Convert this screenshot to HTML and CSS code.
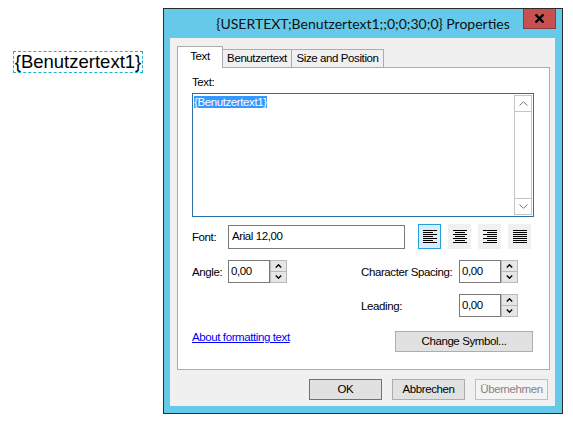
FILE: index.html
```html
<!DOCTYPE html>
<html lang="de">
  <head>
    <meta charset="UTF-8" />
    <title>USERTEXT Properties</title>
    <link rel="stylesheet" href="styles.css">
  </head>
  <body>
    <div class="page">
      <div class="field-label">{Benutzertext1}</div>

      <div class="dialog">
        <div class="titlebar">
          <span class="title">{USERTEXT;Benutzertext1;;0;0;30;0} Properties</span>
          <div class="close">
            <svg width="11" height="9" viewBox="0 0 11 9"><path d="M1.5 0.5 L9.5 8.5 M9.5 0.5 L1.5 8.5" stroke="#000" stroke-width="2.4" /></svg>
          </div>
        </div>

        <div class="client">
          <div class="tabs">
            <div class="tab active">Text</div>
            <div class="tab tab-user">Benutzertext</div>
            <div class="tab tab-size">Size and Position</div>
          </div>

          <div class="panel">
            <div class="lbl-text">Text:</div>
            <div class="textbox">
              <div class="textbox-content"><span class="sel">{Benutzertext1}</span></div>
              <div class="vscroll">
                <div class="sb-btn">
                  <svg width="9" height="5" viewBox="0 0 9 5"><path d="M0.5 4.5 L4.5 0.8 L8.5 4.5" fill="none" stroke="#777" /></svg>
                </div>
                <div class="sb-track"></div>
                <div class="sb-btn">
                  <svg width="9" height="5" viewBox="0 0 9 5"><path d="M0.5 0.5 L4.5 4.2 L8.5 0.5" fill="none" stroke="#777" /></svg>
                </div>
              </div>
            </div>

            <div class="row font-row">
              <span class="lbl">Font:</span>
              <div class="input font-input">Arial 12,00</div>
              <div class="align-group">
                <div class="align-btn selected">
                  <svg width="14" height="13" viewBox="0 0 14 13"><path d="M0 0.5h14M0 2.5h10M0 4.5h14M0 6.5h10M0 8.5h14M0 10.5h10M0 12.5h14" stroke="#000" /></svg>
                </div>
                <div class="align-btn">
                  <svg width="14" height="13" viewBox="0 0 14 13"><path d="M0 0.5h14M2 2.5h10M0 4.5h14M2 6.5h10M0 8.5h14M2 10.5h10M0 12.5h14" stroke="#000" /></svg>
                </div>
                <div class="align-btn">
                  <svg width="14" height="13" viewBox="0 0 14 13"><path d="M0 0.5h14M4 2.5h10M0 4.5h14M4 6.5h10M0 8.5h14M4 10.5h10M0 12.5h14" stroke="#000" /></svg>
                </div>
                <div class="align-btn">
                  <svg width="14" height="13" viewBox="0 0 14 13"><path d="M0 0.5h14M0 2.5h14M0 4.5h14M0 6.5h14M0 8.5h14M0 10.5h14M0 12.5h14" stroke="#000" /></svg>
                </div>
              </div>
            </div>

            <div class="row num-row">
              <span class="lbl">Angle:</span>
              <div class="spin-field">
                <div class="input num-input">0,00</div>
                <div class="spin">
                  <div class="spin-btn"><svg width="7" height="4" viewBox="0 0 7 4"><path d="M0.8 3.5 L3.5 0.8 L6.2 3.5" fill="none" stroke="#000" stroke-width="1.4" /></svg></div>
                  <div class="spin-btn"><svg width="7" height="4" viewBox="0 0 7 4"><path d="M0.8 0.5 L3.5 3.2 L6.2 0.5" fill="none" stroke="#000" stroke-width="1.4" /></svg></div>
                </div>
              </div>
              <span class="lbl lbl-right">Character Spacing:</span>
              <div class="spin-field">
                <div class="input num-input">0,00</div>
                <div class="spin">
                  <div class="spin-btn"><svg width="7" height="4" viewBox="0 0 7 4"><path d="M0.8 3.5 L3.5 0.8 L6.2 3.5" fill="none" stroke="#000" stroke-width="1.4" /></svg></div>
                  <div class="spin-btn"><svg width="7" height="4" viewBox="0 0 7 4"><path d="M0.8 0.5 L3.5 3.2 L6.2 0.5" fill="none" stroke="#000" stroke-width="1.4" /></svg></div>
                </div>
              </div>
            </div>

            <div class="row num-row leading-row">
              <span class="lbl lbl-right">Leading:</span>
              <div class="spin-field">
                <div class="input num-input">0,00</div>
                <div class="spin">
                  <div class="spin-btn"><svg width="7" height="4" viewBox="0 0 7 4"><path d="M0.8 3.5 L3.5 0.8 L6.2 3.5" fill="none" stroke="#000" stroke-width="1.4" /></svg></div>
                  <div class="spin-btn"><svg width="7" height="4" viewBox="0 0 7 4"><path d="M0.8 0.5 L3.5 3.2 L6.2 0.5" fill="none" stroke="#000" stroke-width="1.4" /></svg></div>
                </div>
              </div>
            </div>

            <div class="row link-row">
              <a class="help-link" href="#">About formatting text</a>
              <div class="btn symbol-btn">Change Symbol...</div>
            </div>
          </div>

          <div class="buttons">
            <div class="btn default">OK</div>
            <div class="btn">Abbrechen</div>
            <div class="btn disabled">Übernehmen</div>
          </div>
        </div>
      </div>
    </div>
  </body>
</html>
```

FILE: styles.css
```css
body {
  margin: 0;
  background-color: #fff;
  font-family: "Liberation Sans", Arial, sans-serif;
  font-size: 11.5px;
  letter-spacing: -0.4px;
  color: #000;
}
.page {
  display: flex;
  align-items: flex-start;
  padding: 8px 0 0 13px;
}
.field-label {
  margin-top: 43px;
  width: 128px;
  height: 20px;
  border: 1px dashed #1cb3c8;
  font-size: 18.5px;
  letter-spacing: 0;
  line-height: 20px;
  text-align: center;
  white-space: nowrap;
}

/* window frame */
.dialog {
  margin-left: 20px;
  width: 400px;
  height: 406px;
  box-sizing: border-box;
  border: 1px solid #2b2b2b;
  background-color: #65c9ea;
}
.titlebar {
  height: 29px;
  display: grid;
  grid-template-columns: 1fr auto 1fr;
  align-items: center;
}
.title {
  grid-column: 2;
  font-family: Lato, "Liberation Sans", sans-serif;
  font-size: 14px;
  letter-spacing: 0;
  color: #111;
  white-space: nowrap;
}
.close {
  grid-column: 3;
  justify-self: end;
  align-self: start;
  margin-right: 6px;
  width: 33px;
  height: 20px;
  box-sizing: border-box;
  background-color: #c75050;
  border: 1px solid #8f3a3a;
  border-top: none;
  display: flex;
  align-items: center;
  justify-content: center;
}
.client {
  margin: 0 7px 7px 6px;
  height: 368px;
  box-sizing: border-box;
  padding: 8px 0 0 7px;
  background-color: #f0f0f0;
}

/* tabs */
.tabs {
  display: flex;
  align-items: flex-end;
  height: 21px;
}
.tab {
  height: 18px;
  box-sizing: border-box;
  border: 1px solid #acacac;
  border-bottom: none;
  background-color: #f0f0f0;
  line-height: 17px;
  text-align: center;
  white-space: nowrap;
}
.tab.active {
  width: 46px;
  height: 22px;
  margin-bottom: -1px;
  background-color: #fff;
  line-height: 19px;
  position: relative;
  z-index: 1;
}
.tab-user {
  width: 69px;
  border-left: none;
}
.tab-size {
  width: 92px;
  border-left: none;
}
.panel {
  width: 373px;
  height: 303px;
  box-sizing: border-box;
  border: 1px solid #acacac;
  background-color: #fff;
  padding: 0 15px 0 14px;
}
.lbl-text {
  margin-top: 6px;
  line-height: 16px;
}
.textbox {
  margin-top: 3px;
  height: 124px;
  box-sizing: border-box;
  border: 1px solid #2f6ea3;
  display: flex;
  justify-content: space-between;
}
.textbox-content {
  padding: 2px 0 0 1px;
  line-height: 13px;
}
.sel {
  background-color: #3399ff;
  color: #fff;
}
.vscroll {
  width: 18px;
  margin: 1px 1px 1px 0;
  display: flex;
  flex-direction: column;
}
.sb-btn {
  height: 17px;
  box-sizing: border-box;
  border: 1px solid #c4c4c4;
  display: flex;
  align-items: center;
  justify-content: center;
}
.sb-track {
  flex: 1;
  border-left: 1px solid #c4c4c4;
  border-right: 1px solid #c4c4c4;
}

/* rows */
.row {
  display: flex;
  align-items: center;
}
.lbl {
  width: 36px;
  flex-shrink: 0;
  white-space: nowrap;
}
.lbl-right {
  width: 98px;
  margin-left: 74px;
}
.input {
  box-sizing: border-box;
  border: 1px solid #7a7a7a;
  background-color: #fff;
  padding-left: 3px;
  white-space: nowrap;
}
.font-row {
  margin-top: 7px;
  height: 25px;
}
.font-input {
  width: 177px;
  height: 24px;
  line-height: 21px;
}
.align-group {
  display: flex;
  gap: 7px;
  margin-left: 13px;
}
.align-btn {
  width: 23px;
  height: 25px;
  box-sizing: border-box;
  border: 1px solid #f0f0f0;
  background-color: #f0f0f0;
  display: flex;
  align-items: center;
  justify-content: center;
}
.align-btn.selected {
  background-color: #dcecfc;
  border-color: #26a0da;
}
.num-row {
  margin-top: 11px;
  height: 23px;
}
.leading-row {
  margin-top: 11px;
  padding-left: 95px;
}
.spin-field {
  display: flex;
  height: 23px;
}
.num-input {
  width: 42px;
  height: 23px;
  line-height: 20px;
  padding-left: 2px;
}
.spin {
  width: 17px;
  box-sizing: border-box;
  background-color: #b9b9b9;
  padding: 1px;
  display: flex;
  flex-direction: column;
  gap: 1px;
}
.spin-btn {
  flex: 1;
  background-color: #e6e6e6;
  display: flex;
  align-items: center;
  justify-content: center;
}
.link-row {
  margin-top: 14px;
  justify-content: space-between;
  align-items: flex-start;
}
.help-link {
  color: #0000ff;
  text-decoration: underline;
  line-height: 13px;
}

/* push buttons */
.btn {
  box-sizing: border-box;
  height: 21px;
  border: 1px solid #adadad;
  background-color: #e1e1e1;
  line-height: 19px;
  text-align: center;
  white-space: nowrap;
}
.symbol-btn {
  width: 138px;
  margin-right: 1px;
}
.buttons {
  display: flex;
  justify-content: flex-end;
  gap: 10px;
  margin: 9px 7px 0 0;
}
.buttons .btn {
  width: 73px;
}
.btn.default {
  border-color: #3c7fb1;
}
.btn.disabled {
  background-color: #f4f4f4;
  border-color: #bfbfbf;
  color: #838383;
}
```
